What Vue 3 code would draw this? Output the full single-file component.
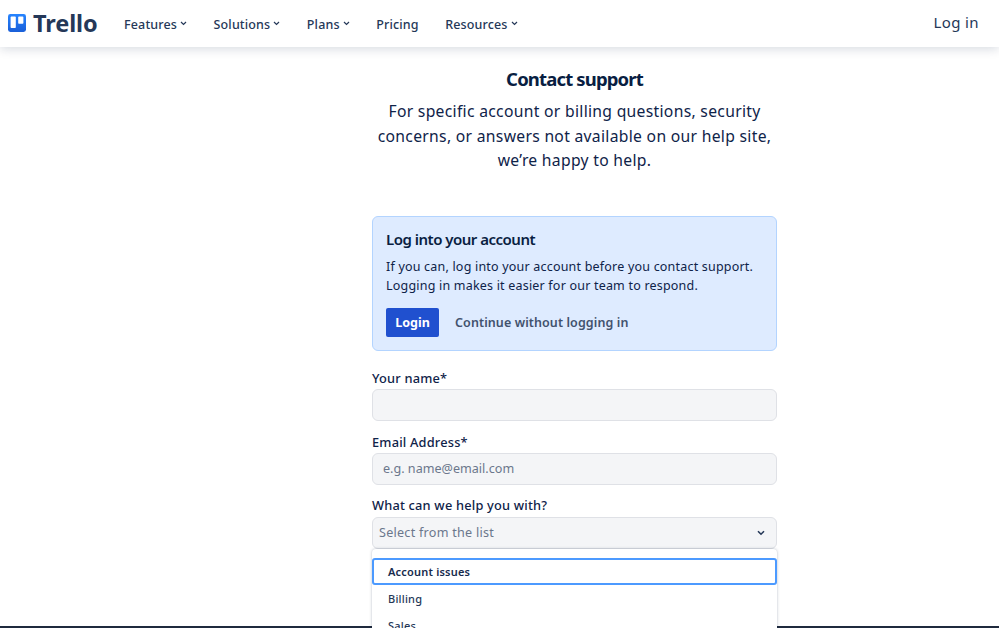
<template>
  <div class="page">
    <header class="topbar">
      <a class="logo">
        <svg class="logo-mark" width="18" height="18" viewBox="0 0 18 18">
          <defs>
            <linearGradient id="trelloGrad" x1="0" y1="1" x2="0" y2="0">
              <stop offset="0" stop-color="#1a5fd8" />
              <stop offset="1" stop-color="#2684ff" />
            </linearGradient>
          </defs>
          <rect width="18" height="18" rx="2.4" fill="url(#trelloGrad)" />
          <rect x="2.6" y="2.6" width="5.2" height="11.4" rx="0.8" fill="#fff" />
          <rect x="10.2" y="2.6" width="5.2" height="7.2" rx="0.8" fill="#fff" />
        </svg>
        <span class="logo-text">Trello</span>
      </a>
      <nav class="nav">
        <a v-for="item in navItems" :key="item.label" class="nav-item">
          {{ item.label }}
          <svg v-if="item.menu" width="7" height="5" viewBox="0 0 7 5" class="nav-caret">
            <path d="M1 1l2.5 2.5L6 1" fill="none" stroke="#253858" stroke-width="1.2" />
          </svg>
        </a>
      </nav>
      <a class="login-link">Log in</a>
    </header>

    <main class="content">
      <h1 class="title">Contact support</h1>
      <p class="lead">
        For specific account or billing questions, security concerns, or answers not available on our help site, we’re happy to help.
      </p>

      <section class="notice">
        <h2>Log into your account</h2>
        <p>If you can, log into your account before you contact support. Logging in makes it easier for our team to respond.</p>
        <div class="notice-actions">
          <button class="btn-primary">Login</button>
          <a class="btn-link">Continue without logging in</a>
        </div>
      </section>

      <label class="field-label first">Your name*</label>
      <div class="input"></div>

      <label class="field-label">Email Address*</label>
      <div class="input placeholder">e.g. name@email.com</div>

      <label class="field-label tight">What can we help you with?</label>
      <div class="input select">
        <span>Select from the list</span>
        <svg width="8" height="6" viewBox="0 0 8 6">
          <path d="M1 1.2l3 3 3-3" fill="none" stroke="#253858" stroke-width="1.6" />
        </svg>
      </div>

      <div class="dropdown">
        <div
          v-for="(opt, i) in options"
          :key="opt"
          class="option"
          :class="{ active: i === 0 }"
        >{{ opt }}</div>
      </div>
    </main>
    <div class="bottom-line"></div>
  </div>
</template>

<script setup>
const navItems = [
  { label: 'Features', menu: true },
  { label: 'Solutions', menu: true },
  { label: 'Plans', menu: true },
  { label: 'Pricing', menu: false },
  { label: 'Resources', menu: true }
]

const options = ['Account issues', 'Billing', 'Sales']
</script>

<style>
html, body {
  margin: 0;
  height: 100%;
  overflow: hidden;
  background: #fff;
}
</style>

<style scoped>
.page {
  position: relative;
  height: 628px;
  overflow: hidden;
  font-family: "Noto Sans", "Lato", sans-serif;
  color: #091e42;
}

.topbar {
  position: relative;
  z-index: 2;
  height: 47px;
  display: flex;
  align-items: center;
  padding: 0 20px 0 8px;
  box-sizing: border-box;
  background: #fff;
  box-shadow: 0 2px 10px rgba(9, 30, 66, 0.16);
}

.logo {
  display: flex;
  align-items: center;
  gap: 7px;
  width: 116px;
  margin-top: -2px;
}

.logo-text {
  font-size: 23.5px;
  font-weight: 700;
  color: #253858;
  letter-spacing: -0.1px;
}

.nav {
  display: flex;
  gap: 26.5px;
  flex: 1;
  margin-top: 1px;
}

.nav-item {
  display: flex;
  align-items: center;
  gap: 3px;
  font-size: 12.5px;
  font-weight: 500;
  letter-spacing: 0.15px;
  color: #253858;
}

.nav-caret {
  margin-top: -2px;
}

.login-link {
  font-size: 15px;
  letter-spacing: 0.4px;
  color: #253858;
  margin-top: -3px;
}

.content {
  width: 405px;
  margin-left: 372px;
  display: flex;
  flex-direction: column;
}

.title {
  margin: 19px 0 0;
  font-size: 18.5px;
  line-height: 26px;
  font-weight: 700;
  letter-spacing: -0.85px;
  text-align: center;
  color: #091e42;
}

.lead {
  margin: 7px 0 0;
  font-size: 15.7px;
  line-height: 24.5px;
  letter-spacing: 0.3px;
  text-align: center;
  color: #0f2349;
}

.notice {
  margin-top: 43px;
  height: 135px;
  box-sizing: border-box;
  padding: 12px 13px 0;
  background: #deebff;
  border: 1px solid #b3d4ff;
  border-radius: 6px;
}

.notice h2 {
  margin: 0;
  font-size: 15px;
  line-height: 20px;
  font-weight: 600;
  letter-spacing: -0.5px;
  color: #091e42;
}

.notice p {
  margin: 8px 0 0;
  font-size: 12.5px;
  line-height: 19.5px;
  letter-spacing: 0.2px;
  color: #0f2349;
}

.notice-actions {
  display: flex;
  align-items: center;
  gap: 16px;
  margin-top: 12px;
}

.btn-primary {
  width: 53px;
  height: 29px;
  padding: 0;
  border: 0;
  border-radius: 2px;
  background: #2050cf;
  color: #fff;
  font-family: inherit;
  font-size: 12.5px;
  font-weight: 700;
}

.btn-link {
  font-size: 12.5px;
  font-weight: 600;
  letter-spacing: 0.1px;
  color: #42526e;
}

.field-label {
  display: block;
  margin-top: 12px;
  height: 18px;
  line-height: 18px;
  font-size: 12.8px;
  font-weight: 500;
  letter-spacing: 0.2px;
  color: #0f2349;
}

.field-label.first {
  margin-top: 18px;
}

.field-label.tight {
  margin-top: 11px;
  height: 19px;
}

.input {
  margin-top: 2px;
  height: 32px;
  box-sizing: border-box;
  padding: 0 10px;
  display: flex;
  align-items: center;
  background: #f4f5f7;
  border: 1px solid #dfe1e6;
  border-radius: 6px;
  font-size: 12.6px;
  letter-spacing: 0.25px;
  color: #6b778c;
}

.placeholder {
  letter-spacing: 0;
}

.select {
  padding: 0 11px 0 6px;
  justify-content: space-between;
}

.dropdown {
  height: 90px;
  box-sizing: border-box;
  padding-top: 9px;
  background: #fff;
  border-radius: 4px;
  box-shadow: 0 0 3px rgba(9, 30, 66, 0.3);
  position: relative;
  z-index: 3;
}

.option {
  height: 27px;
  line-height: 27px;
  padding-left: 16px;
  font-size: 11px;
  font-weight: 500;
  letter-spacing: 0.2px;
  color: #253858;
  box-sizing: border-box;
}

.option.active {
  line-height: 23px;
  border: 2px solid #4c9aff;
  border-radius: 3px;
  padding-left: 14px;
  color: #172b4d;
  font-weight: 600;
}

.bottom-line {
  position: absolute;
  left: 0;
  right: 0;
  bottom: 0;
  height: 2px;
  background: #1f2a3d;
}
</style>
